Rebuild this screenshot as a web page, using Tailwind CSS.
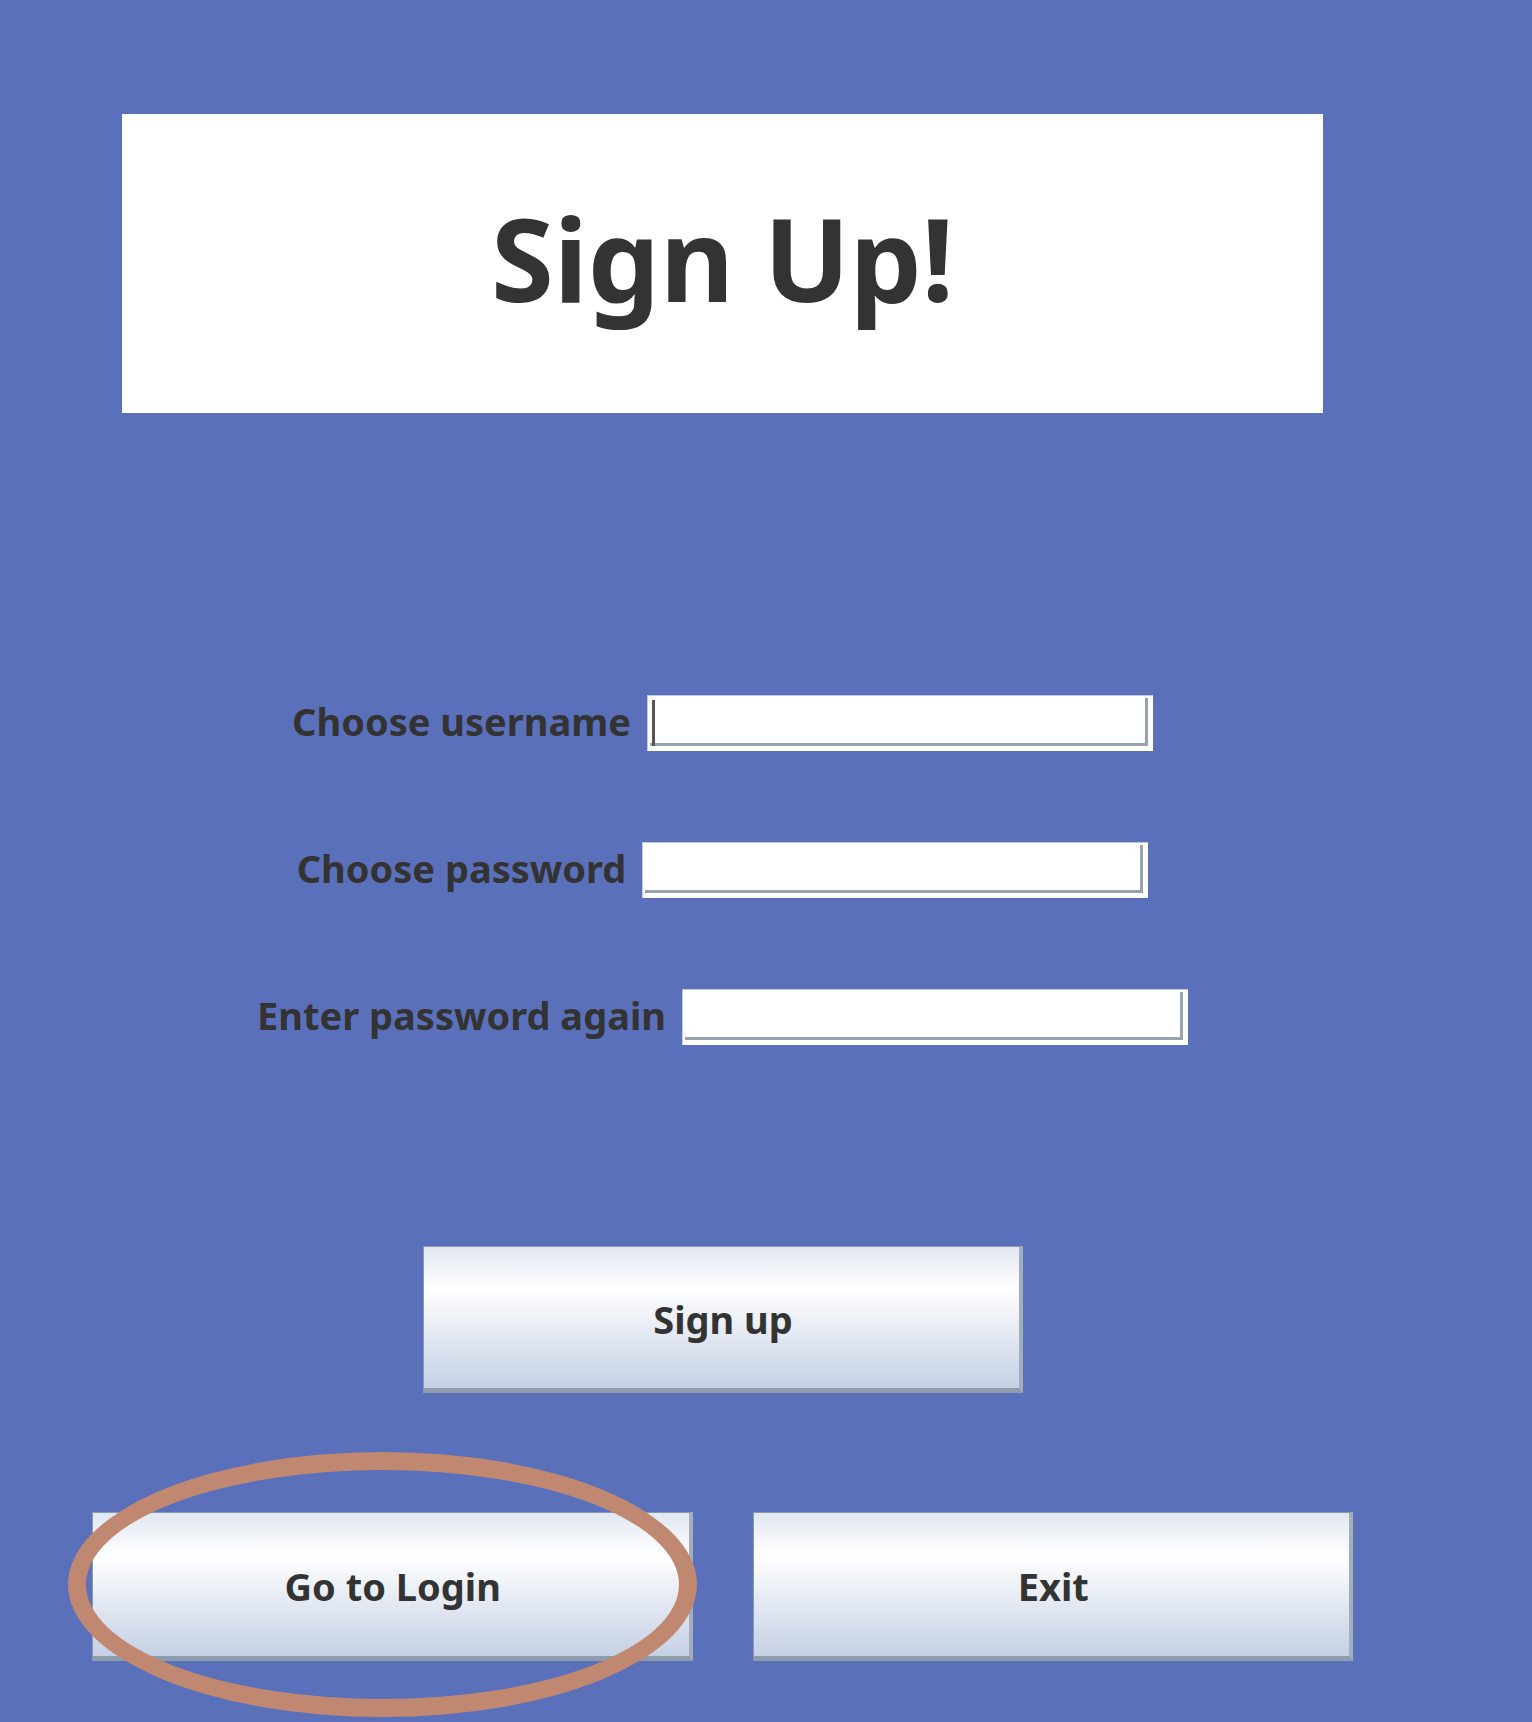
<!DOCTYPE html>
<html lang="en">
<head>
<meta charset="utf-8">
<meta name="viewport" content="width=device-width, initial-scale=1">
<title>Sign Up</title>
<script src="https://cdn.jsdelivr.net/npm/@tailwindcss/browser@4"></script>
</head>
<body class="min-h-screen bg-[#5a70ba] font-['Noto_Sans','Open_Sans',sans-serif] font-bold text-[#333333]">
<main class="pt-[114px] pr-[179px] pb-[60px] pl-[92px]">
  <header class="mx-[30px] flex h-[299px] items-center justify-center bg-white pb-3">
    <h1 class="text-[114px] leading-none">Sign Up!</h1>
  </header>

  <form class="mt-[282px] flex flex-col items-center" onsubmit="return false">
    <div class="flex flex-col items-center gap-[91px]">
      <div class="flex items-center gap-4">
        <label for="username" class="pb-1 text-[38px] leading-[52px]">Choose username</label>
        <div class="relative h-14 w-[506px] border border-[#c3c9dc] border-r-white border-b-white bg-white pt-0.5 pr-1 pb-1 pl-0.5">
          <input id="username" type="text" class="block h-full w-full border-r-3 border-b-3 border-[#98a3b0] bg-white px-2 text-[38px] outline-none">
          <span class="absolute top-1 left-1 h-[46px] w-[3px] bg-[#555555]"></span>
        </div>
      </div>
      <div class="flex items-center gap-4">
        <label for="password" class="pb-1 text-[38px] leading-[52px]">Choose password</label>
        <div class="h-14 w-[506px] border border-[#c3c9dc] border-r-white border-b-white bg-white pt-0.5 pr-1 pb-1 pl-0.5">
          <input id="password" type="password" class="block h-full w-full border-r-3 border-b-3 border-[#98a3b0] bg-white px-2 text-[38px] outline-none">
        </div>
      </div>
      <div class="flex items-center gap-4">
        <label for="confirm" class="pb-1 text-[38px] leading-[52px]">Enter password again</label>
        <div class="h-14 w-[506px] border border-[#c3c9dc] border-r-white border-b-white bg-white pt-0.5 pr-1 pb-1 pl-0.5">
          <input id="confirm" type="password" class="block h-full w-full border-r-3 border-b-3 border-[#98a3b0] bg-white px-2 text-[38px] outline-none">
        </div>
      </div>
    </div>
    <button type="submit" class="mt-[201px] h-[147px] w-[600px] border-t border-r-4 border-b-5 border-l border-t-[#8c98ac] border-r-[#a3aebb] border-b-[#8f9cab] border-l-[#8c98ac] bg-linear-to-b from-[#e1e7f1] via-white via-30% to-[#c5d0e4] pt-0.5 pl-1 text-[38px] leading-[52px]">Sign up</button>
  </form>

  <div class="mt-[119px] grid grid-cols-2 gap-[60px]">
    <div class="relative">
      <button type="button" class="h-[149px] w-full border-t border-r-4 border-b-5 border-l border-t-[#8c98ac] border-r-[#a3aebb] border-b-[#8f9cab] border-l-[#8c98ac] bg-linear-to-b from-[#e1e7f1] via-white via-30% to-[#c5d0e4] pt-0.5 pl-1 text-[38px] leading-[52px]">Go to Login</button>
      <div class="pointer-events-none absolute -top-[60px] right-[-4px] -bottom-[56px] -left-6 rounded-[50%] border-18 border-[#c08870]"></div>
    </div>
    <button type="button" class="h-[149px] w-full border-t border-r-4 border-b-5 border-l border-t-[#8c98ac] border-r-[#a3aebb] border-b-[#8f9cab] border-l-[#8c98ac] bg-linear-to-b from-[#e1e7f1] via-white via-30% to-[#c5d0e4] pt-0.5 pl-1 text-[38px] leading-[52px]">Exit</button>
  </div>
</main>
</body>
</html>
